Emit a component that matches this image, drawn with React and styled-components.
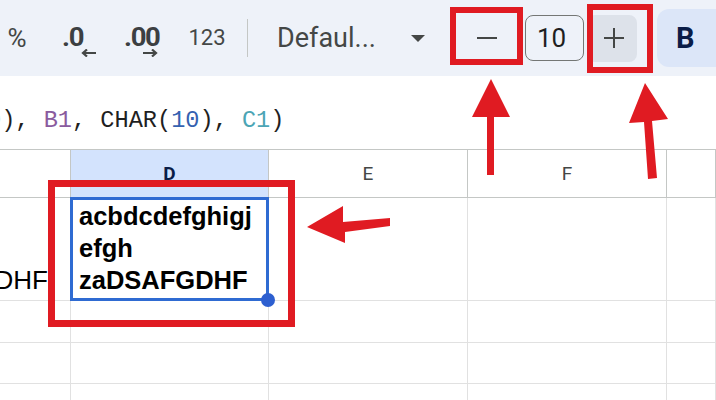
import React from 'react'
import styled, { createGlobalStyle } from 'styled-components'

const GlobalStyle = createGlobalStyle`
  body {
    margin: 0;
    background: #ffffff;
    overflow: hidden;
  }
`

const red = '#e01b22'

function App() {
  return (
    <StyledPage>
      <GlobalStyle />
      <Toolbar>
        <Tool $w={34} $ml={0}>%</Tool>
        <DecIcon $ml={25}>
          <span>.0</span>
          <ArrowSmall dir="left" />
        </DecIcon>
        <DecIcon $ml={22}>
          <span>.00</span>
          <ArrowSmall dir="right" />
        </DecIcon>
        <Tool $w={40} $ml={26} $size={22}>123</Tool>
        <Divider />
        <FontSelect>
          <span>Defaul...</span>
          <Caret />
        </FontSelect>
        <StepButton $ml={25} $w={63}>
          <Bar />
        </StepButton>
        <SizeBox>10</SizeBox>
        <StepButton $ml={7} $w={46} $filled>
          <Bar />
          <Bar $vertical />
        </StepButton>
        <BoldButton>B</BoldButton>
      </Toolbar>

      <FormulaBar>
        <Formula>
          <Tok $c="#3561b0">0</Tok>),{' '}
          <Tok $c="#8a5b9e">B1</Tok>, CHAR(
          <Tok $c="#3561b0">10</Tok>),{' '}
          <Tok $c="#4ca5b5">C1</Tok>)
        </Formula>
      </FormulaBar>

      <Grid>
        <HeadCell />
        <HeadCell $active>D</HeadCell>
        <HeadCell>E</HeadCell>
        <HeadCell>F</HeadCell>
        <HeadCell />

        <Cell $h={103} $right>
          <Overflow>zaDSAFGDHF</Overflow>
        </Cell>
        <Cell $h={103} $selected>
          <WrapText>
            <div>acbdcdefghigj</div>
            <div>efgh</div>
            <div>zaDSAFGDHF</div>
          </WrapText>
        </Cell>
        <Cell $h={103} />
        <Cell $h={103} />
        <Cell $h={103} />

        {[42, 41, 42].map((h, r) =>
          [0, 1, 2, 3, 4].map((c) => <Cell key={r + '-' + c} $h={h} />)
        )}
      </Grid>

      <RedBox $x={450} $y={7} $w={73} $h={58} $b={6} />
      <RedBox $x={587} $y={4} $w={66} $h={69} $b={6} />
      <RedBox $x={48} $y={180} $w={247} $h={147} $b={7} />

      <Arrows width="716" height="400" viewBox="0 0 716 400">
        <polygon
          fill={red}
          points="491,79 510,117 494,117 494,175 487,175 487,117 472,117"
        />
        <polygon
          fill={red}
          points="645,83 668,119 652,121 657,178 648,179 644,122 629,123"
        />
        <polygon
          fill={red}
          points="307,227 343,206 343,222 390,218 390,226 345,232 345,243"
        />
      </Arrows>
    </StyledPage>
  )
}

function ArrowSmall({ dir }) {
  const d = dir === 'left' ? 'M15 4H2 M6 0.5 L2 4 L6 7.5' : 'M0 4H13 M9 0.5 L13 4 L9 7.5'
  return (
    <svg width="15" height="8" viewBox="0 0 15 8">
      <path d={d} stroke="#444746" strokeWidth="2.2" fill="none" />
    </svg>
  )
}

export default App

const StyledPage = styled.div`
  position: relative;
  width: 716px;
  height: 400px;
  overflow: hidden;
  font-family: Roboto, 'Liberation Sans', sans-serif;
  color: #1f1f1f;
`

const Toolbar = styled.div`
  height: 76px;
  background: #eef2f9;
  display: flex;
  align-items: center;
  overflow: hidden;
  color: #444746;
  & > * {
    flex-shrink: 0;
  }
`

const Tool = styled.div`
  width: ${({ $w }) => $w}px;
  margin-left: ${({ $ml }) => $ml}px;
  font-size: ${({ $size }) => $size || 26}px;
  text-align: center;
  line-height: 1;
`

const DecIcon = styled.div`
  width: 40px;
  margin-left: ${({ $ml }) => $ml}px;
  padding: 9px 3px 0 3px;
  box-sizing: border-box;
  display: flex;
  flex-direction: column;
  span {
    font-size: 25px;
    font-weight: 700;
    line-height: 20px;
    letter-spacing: -1.2px;
    color: #3c3f42;
    transform: scaleX(1.1);
    transform-origin: left center;
  }
  svg {
    align-self: flex-end;
    margin-top: 1px;
  }
`

const Divider = styled.div`
  width: 1px;
  height: 38px;
  margin-left: 20px;
  background: #c4c7c5;
`

const FontSelect = styled.div`
  width: 153px;
  margin-left: 29px;
  padding-right: 5px;
  box-sizing: border-box;
  display: flex;
  align-items: center;
  justify-content: space-between;
  font-size: 27px;
`

const Caret = styled.div`
  width: 0;
  height: 0;
  border-left: 7px solid transparent;
  border-right: 7px solid transparent;
  border-top: 7px solid #444746;
`

const StepButton = styled.div`
  position: relative;
  width: ${({ $w }) => $w}px;
  height: 47px;
  margin-left: ${({ $ml }) => $ml}px;
  background: ${({ $filled }) => ($filled ? '#dde2ea' : 'transparent')};
  border-radius: 4px 8px 8px 4px;
  display: flex;
  align-items: center;
  justify-content: center;
`

const Bar = styled.div`
  position: absolute;
  width: ${({ $vertical }) => ($vertical ? 2.5 : 20)}px;
  height: ${({ $vertical }) => ($vertical ? 20 : 2.5)}px;
  background: #444746;
`

const SizeBox = styled.div`
  width: 59px;
  height: 46px;
  margin-left: 7px;
  box-sizing: border-box;
  border: 1px solid #747775;
  border-radius: 8px;
  display: flex;
  align-items: center;
  justify-content: center;
  padding-right: 6px;
  font-size: 26px;
  color: #1f1f1f;
`

const BoldButton = styled.div`
  width: 72px;
  height: 58px;
  margin-left: 20px;
  box-sizing: border-box;
  padding-left: 19px;
  border-radius: 12px;
  background: #dce6f8;
  display: flex;
  align-items: center;
  font-size: 29px;
  font-weight: 700;
  color: #0b1d48;
`

const FormulaBar = styled.div`
  height: 73px;
  box-sizing: border-box;
  padding-top: 16px;
  display: flex;
  align-items: center;
  overflow: hidden;
  background: #ffffff;
`

const Formula = styled.div`
  margin-left: -13px;
  white-space: pre;
  font-family: 'Liberation Mono', monospace;
  font-size: 23.6px;
  color: #1f1f1f;
`

const Tok = styled.span`
  color: ${({ $c }) => $c};
`

const Grid = styled.div`
  display: grid;
  grid-template-columns: 71px 198px 199px 199px 1fr;
  border-top: 1px solid #c4c7c5;
`

const HeadCell = styled.div`
  height: 48px;
  box-sizing: border-box;
  border-right: 1px solid #c4c7c5;
  border-bottom: 1px solid #c4c7c5;
  background: ${({ $active }) => ($active ? '#d3e3fd' : '#ffffff')};
  display: flex;
  align-items: center;
  justify-content: center;
  font-size: 19px;
  font-weight: ${({ $active }) => ($active ? 700 : 400)};
  color: ${({ $active }) => ($active ? '#0b1d48' : '#444746')};
`

const Cell = styled.div`
  position: relative;
  height: ${({ $h }) => $h}px;
  box-sizing: border-box;
  border-right: 1px solid #e1e1e1;
  border-bottom: 1px solid #e1e1e1;
  display: flex;
  align-items: flex-end;
  justify-content: ${({ $right }) => ($right ? 'flex-end' : 'flex-start')};
  overflow: ${({ $selected }) => ($selected ? 'visible' : 'hidden')};
  z-index: ${({ $selected }) => ($selected ? 1 : 0)};
  font-family: 'Liberation Sans', Arial, sans-serif;
  font-size: 25.5px;
  color: #000000;

  ${({ $selected }) =>
    $selected &&
    `
    &::after {
      content: '';
      position: absolute;
      top: -1px;
      left: -1px;
      right: -1px;
      bottom: -1px;
      border: 3px solid #2f6bd2;
    }
    &::before {
      content: '';
      position: absolute;
      right: -7px;
      bottom: -7px;
      width: 14px;
      height: 14px;
      border-radius: 50%;
      background: #2d5fd0;
      z-index: 2;
    }
  `}
`

const Overflow = styled.div`
  white-space: nowrap;
  padding: 0 22px 4px 0;
  line-height: 32px;
  font-size: 26px;
  flex-shrink: 0;
`

const WrapText = styled.div`
  padding: 0 8px 4px;
  font-weight: 700;
  line-height: 32px;
`

const RedBox = styled.div`
  position: absolute;
  left: ${({ $x }) => $x}px;
  top: ${({ $y }) => $y}px;
  width: ${({ $w }) => $w}px;
  height: ${({ $h }) => $h}px;
  box-sizing: border-box;
  border: ${({ $b }) => $b}px solid ${red};
  z-index: 5;
`

const Arrows = styled.svg`
  position: absolute;
  left: 0;
  top: 0;
  pointer-events: none;
  z-index: 6;
`
